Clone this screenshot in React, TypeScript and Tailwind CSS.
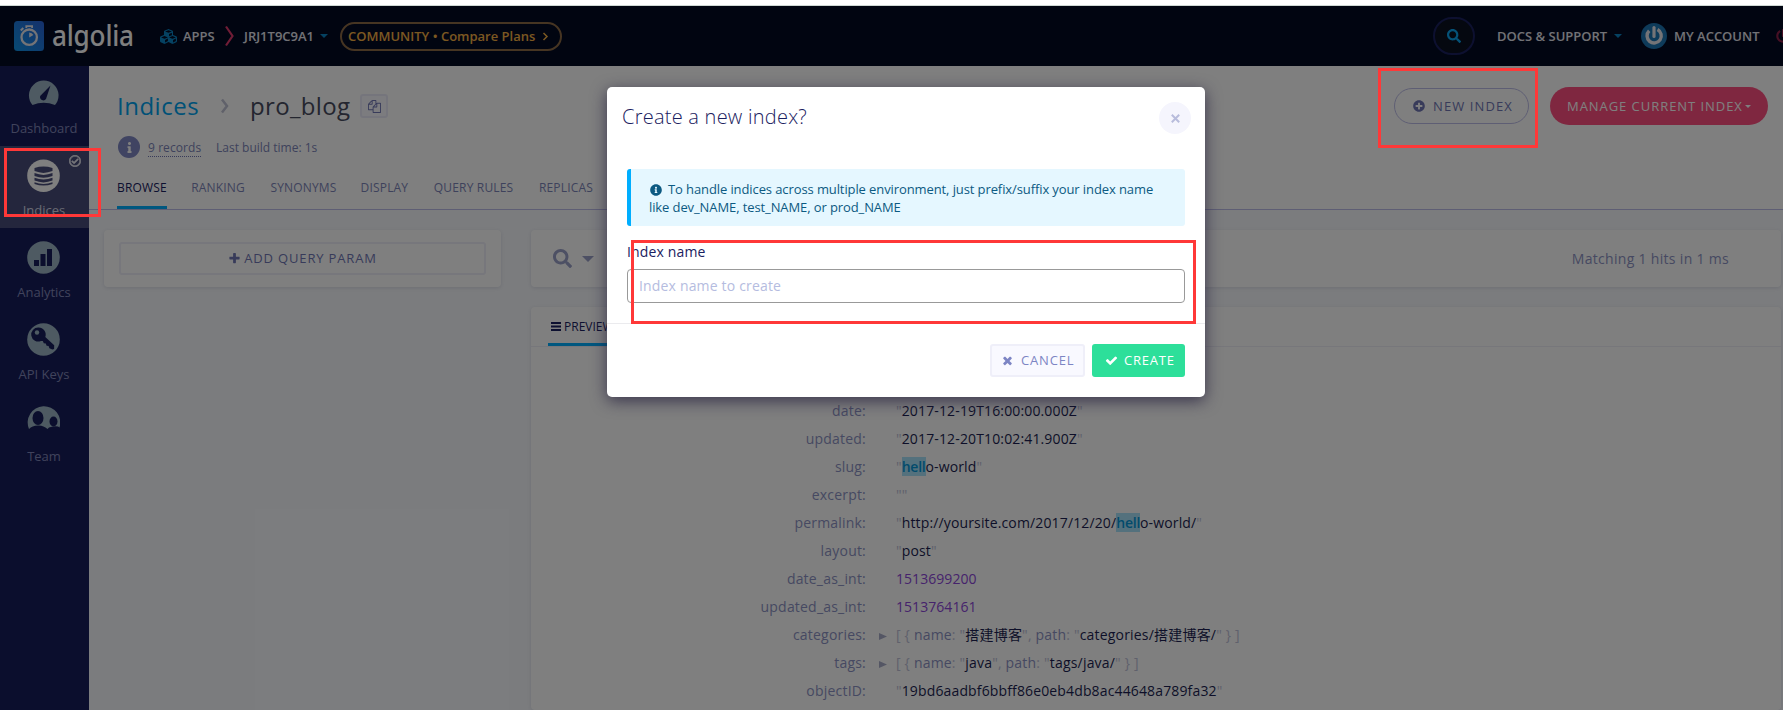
import React from "react";
import { FaCubes, FaSearch, FaPlusCircle, FaInfoCircle, FaInfo, FaPowerOff, FaRegCheckCircle } from "react-icons/fa";

const Glyph = ({ d, className }: { d: string; className: string }) => (
  <svg viewBox="0 0 1792 1792" className={className} fill="currentColor"><path d={d} /></svg>
);
const COPY = "M1696 384q40 0 68 28t28 68v1216q0 40-28 68t-68 28h-960q-40 0-68-28t-28-68v-288h-544q-40 0-68-28t-28-68v-672q0-40 20-88t48-76l408-408q28-28 76-48t88-20h416q40 0 68 28t28 68v328q68-40 128-40h416zm-544 213l-299 299h299v-299zm-640-384l-299 299h299v-299zm196 647l316-316v-416h-384v416q0 40-28 68t-68 28h-416v640h512v-256q0-40 20-88t48-76zm956 804v-1152h-384v416q0 40-28 68t-68 28h-416v640h896z";
const TIMES = "M1490 1322q0 40-28 68l-136 136q-28 28-68 28t-68-28l-294-294-294 294q-28 28-68 28t-68-28l-136-136q-28-28-28-68t28-68l294-294-294-294q-28-28-28-68t28-68l136-136q28-28 68-28t68 28l294 294 294-294q28-28 68-28t68 28l136 136q28 28 28 68t-28 68l-294 294 294 294q28 28 28 68z";
const CHECK = "M1671 566q0 40-28 68l-724 724-136 136q-28 28-68 28t-68-28l-136-136-362-362q-28-28-28-68t28-68l136-136q28-28 68-28t68 28l294 295 656-657q28-28 68-28t68 28l136 136q28 28 28 68z";
const PLUS = "M1600 736v192q0 40-28 68t-68 28h-416v416q0 40-28 68t-68 28h-192q-40 0-68-28t-28-68v-416h-416q-40 0-68-28t-28-68v-192q0-40 28-68t68-28h416v-416q0-40 28-68t68-28h192q40 0 68 28t28 68v416h416q40 0 68 28t28 68z";

const Caret = ({ className }: { className: string }) => (
  <svg viewBox="0 0 10 5" preserveAspectRatio="none" className={className} fill="currentColor"><path d="M0 0h10L5 5z" /></svg>
);

const Dim = ({ children }: { children: React.ReactNode }) => <span className="text-[#c0c2d8]">{children}</span>;
const Str = ({ children }: { children: React.ReactNode }) => (
  <>
    <Dim>"</Dim>
    <span className="text-[#1c1f52]">{children}</span>
    <Dim>"</Dim>
  </>
);
const Hit = () => <span className="bg-[#a8e2fa] text-[#0497d8] font-semibold tracking-[-0.25px] inline-block leading-[19px]">hell</span>;
const Num = ({ children }: { children: React.ReactNode }) => <span className="text-[#8c46d8] tracking-[0.050px]">{children}</span>;

const rows: { k: string; arrow?: boolean; v: React.ReactNode }[] = [
  { k: "date", v: <Str>2017-12-19T16:00:00.000Z</Str> },
  { k: "updated", v: <Str>2017-12-20T10:02:41.900Z</Str> },
  { k: "slug", v: <Str><Hit />o-world</Str> },
  { k: "excerpt", v: <Str>{""}</Str> },
  { k: "permalink", v: <Str>http://yoursite.com/2017/12/20/<Hit />o-world/</Str> },
  { k: "layout", v: <Str>post</Str> },
  { k: "date_as_int", v: <Num>1513699200</Num> },
  { k: "updated_as_int", v: <Num>1513764161</Num> },
  { k: "categories", arrow: true, v: <><Dim>[ {"{"} </Dim>name<Dim>: </Dim><Str>搭建博客</Str><Dim>, </Dim>path<Dim>: </Dim><Str>categories/搭建博客/</Str><Dim> {"}"} ]</Dim></> },
  { k: "tags", arrow: true, v: <><Dim>[ {"{"} </Dim>name<Dim>: </Dim><Str>java</Str><Dim>, </Dim>path<Dim>: </Dim><Str>tags/java/</Str><Dim> {"}"} ]</Dim></> },
  { k: "objectID", v: <Str>19bd6aadbf6bbff86e0eb4db8ac44648a789fa32</Str> },
];

const Disc = ({ children }: { children: React.ReactNode }) => (
  <svg className="mr-px" width="33" height="33" viewBox="0 0 33 33" fill="none">{children}</svg>
);

const SideItem = ({ label, className, children }: { label: string; className: string; children: React.ReactNode }) => (
  <div className={"relative pr-px flex flex-col items-center " + className}>
    {children}
    <span className="mt-[9px] text-[13px] leading-[18px]">{label}</span>
  </div>
);

const Header = () => (
  <header className="h-[60px] bg-[#020a23] flex items-center text-[13px] font-semibold text-[#e4e4ec] whitespace-nowrap shrink-0">
    <svg className="ml-[14px]" width="30" height="30" viewBox="0 0 30 30" fill="none">
      <defs>
        <linearGradient id="g" x1="1" y1="0" x2="0" y2="1">
          <stop offset="0" stopColor="#2a62d8" />
          <stop offset="1" stopColor="#0f94e6" />
        </linearGradient>
      </defs>
      <rect width="30" height="30" rx="3.5" fill="url(#g)" />
      <circle cx="15.200" cy="16.200" r="7.700" stroke="#e8e8ee" strokeWidth="2.300" />
      <path d="M15.200 16.500V11.500a4.800 4.800 0 0 1 4.200 2.600z" fill="#e8e8ee" />
      <path d="M12.300 7V5.200h5.800V7" stroke="#e8e8ee" strokeWidth="1.800" />
      <path d="M6.800 9.500l2.500-2.500" stroke="#e8e8ee" strokeWidth="2" />
    </svg>
    <span className="ml-[8px] w-[84px] flex justify-start">
      <span className="inline-block origin-left scale-x-[0.9] text-[29px] leading-[50px] font-medium tracking-[-0.200px] -mt-[3px] text-white font-['Noto_Sans',sans-serif]">algolia</span>
    </span>
    <FaCubes className="ml-[24px] text-[17px] text-[#0a84c4]" />
    <span className="ml-[6px] w-[34px] pt-px">APPS</span>
    <svg className="ml-[6px]" width="14" height="24" viewBox="0 0 14 24" fill="none"><path d="M3 2.500l6.500 9.500L3 21.500" stroke="#e03a6c" strokeWidth="2.200" /></svg>
    <span className="ml-[7px] w-[69px] pt-px">JRJ1T9C9A1</span>
    <Caret className="ml-[7px] w-[8px] h-[4px] text-[#0a84c4]" />
    <div className="ml-[12px] w-[222px] h-[29px] rounded-full border-2 border-[#8d6a45] flex items-center pl-[6px] text-[#f6b043]">
      <span className="w-[187px] pt-px">COMMUNITY • Compare Plans</span>
      <svg className="ml-[7px]" width="7" height="9" viewBox="0 0 7 9" fill="none"><path d="M1.500 1l3.500 3.500L1.500 8" stroke="#f6b043" strokeWidth="1.500" /></svg>
    </div>
    <div className="flex-1" />
    <div className="w-[42px] h-[38px] rounded-full border-2 border-[#1a2160] flex items-center justify-center bg-[#0a1020]"><FaSearch className="text-[14px] text-[#0aa4f0]" /></div>
    <span className="ml-[22px] w-[111px] pt-px">DOCS &amp; SUPPORT</span>
    <Caret className="ml-[6px] w-[8px] h-[4px] text-[#0a84c4]" />
    <svg className="ml-[19px]" width="26" height="26" viewBox="0 0 26 26" fill="none">
      <circle cx="13" cy="13" r="13" fill="#1c76b4" />
      <path d="M8.200 7.800a7.100 7.100 0 1 0 8.300-1.200" stroke="#e8e8ee" strokeWidth="3.400" />
      <path d="M13 4.500v9" stroke="#e8e8ee" strokeWidth="3.200" strokeLinecap="round" />
    </svg>
    <span className="ml-[7px] w-[86px] pt-px">MY ACCOUNT</span>
    <div className="ml-[16px] w-[7px] overflow-hidden"><FaPowerOff className="text-[14px] text-[#8c2048]" /></div>
  </header>
);

const Sidebar = () => (
  <aside className="w-[89px] bg-[#171d5a] shrink-0">
    <SideItem label="Dashboard" className="h-[80px] pt-[11px] text-[#8187b8]">
      <Disc><path d="M5.500 28A14.800 14.800 0 1 1 28 28Q16.500 23.500 5.500 28Z" fill="#9cb4c4" /><path d="M23.500 8.500L19 22a3.300 3.300 0 0 1-5.800-2.900z" fill="#171d5a" /></Disc>
    </SideItem>
    <SideItem label="Indices" className="h-[82px] pt-[13px] bg-[#494d7a] text-[#d5d7e6]">
      <Disc>
        <circle cx="16.500" cy="16.700" r="16.300" fill="#fff" />
        <path d="M7.500 8.900q9-2.800 18 0v3.200q-9 3.600-18 0zM7.500 14.100q9 3.600 18 0v2.900q-9 3.600-18 0zM7.500 18.700q9 3.600 18 0v2.900q-9 3.600-18 0zM7.500 23.200q9 3.600 18 0v1.800q-9 3-18 0z" fill="#494d7a" />
      </Disc>
      <FaRegCheckCircle className="absolute right-[8px] top-[9px] text-[12px] text-[#e8e8f0] stroke-[#e8e8f0] stroke-[24px]" />
    </SideItem>
    <SideItem label="Analytics" className="h-[82px] pt-[13px] text-[#8187b8]">
      <Disc><circle cx="16.500" cy="16.500" r="16.300" fill="#9cb4c4" /><path d="M7 19h5v6H7zM13.500 13h5v12h-5zM20 8h5v17h-5z" fill="#171d5a" /></Disc>
    </SideItem>
    <SideItem label="API Keys" className="h-[82px] pt-[13px] text-[#8187b8]">
      <Disc><circle cx="16.500" cy="16.500" r="16.300" fill="#9cb4c4" /><path d="M11.500 4.500a7 7 0 1 0 2.500 13.400l1.800.2 1 2.200 2 .3.800 2.200 2 .3.800 2.200 3 1.200 1.700-.6.100-3.600-8.900-8.400A7 7 0 0 0 11.500 4.500z" fill="#171d5a" /><circle cx="10" cy="9.500" r="2.200" fill="#9cb4c4" /></Disc>
    </SideItem>
    <SideItem label="Team" className="h-[82px] pt-[13px] text-[#8187b8]">
      <Disc><path d="M2 24A16.300 16.300 0 1 1 32.500 22.500L31 21.500Q28 20.500 22 22.500L20.500 24Q16 20 11 20.500Q5 20.500 2 24Z" fill="#9cb4c4" /><ellipse cx="11" cy="13" rx="5.500" ry="7" fill="#171d5a" /><ellipse cx="26.500" cy="16.500" rx="4" ry="5" fill="#171d5a" /></Disc>
    </SideItem>
  </aside>
);

const tabs: [string, string][] = [["BROWSE", "w-[50px]"], ["RANKING", "w-[55px]"], ["SYNONYMS", "w-[66px]"], ["DISPLAY", "w-[49px]"], ["QUERY RULES", "w-[81px]"], ["REPLICAS", "w-[60px]"]];

const Card = "bg-white rounded-[4px] shadow-[0_1px_4px_rgba(60,60,100,0.15)]";

const Page = () => (
  <div className="flex-1 flex flex-col bg-[#f7f9fd]">
    <div className="h-[144px] bg-white border-b border-[#bdbde8] flex flex-col shrink-0">
      <div className="flex items-center h-[38px] mt-[21px] pl-[28px] pr-[15px]">
        <span className="w-[81px] text-[24px] tracking-[0.500px] text-[#00a2ee]">Indices</span>
        <svg className="ml-[22px]" width="10" height="16" viewBox="0 0 10 16" fill="none"><path d="M2 1.500l5 6.500-5 6.500" stroke="#c0c2d4" strokeWidth="2.500" /></svg>
        <span className="ml-[20px] w-[101px] text-[24px] tracking-[0.350px] text-[#484c60] whitespace-nowrap">pro_blog</span>
        <div className="ml-[9px] w-[28px] h-[24px] rounded-[3px] border-2 border-[#ebebf8] bg-[#f8f9ff] flex items-center justify-center text-[#7077b5]"><Glyph d={COPY} className="size-[13px]" /></div>
        <div className="flex-1" />
        <div className="w-[135px] h-[36px] rounded-full border border-[#bdbde8] flex items-center pl-[18px] text-[13px] text-[#7077b5]"><FaPlusCircle className="text-[12px]" /><span className="ml-[8px] pt-px tracking-[1.100px] whitespace-nowrap">NEW INDEX</span></div>
        <div className="ml-[21px] w-[218px] h-[38px] rounded-full bg-[#ff4f81] flex items-center pl-[17px] text-[13px] text-white"><span className="tracking-[0.950px] w-[176px] pt-px whitespace-nowrap">MANAGE CURRENT INDEX</span><Caret className="ml-[2px] w-[6px] h-[3px]" /></div>
      </div>
      <div className="flex items-center mt-[11px] pl-[29px] h-[22px] text-[12px] text-[#7d85b8]">
        <div className="size-[22px] rounded-full bg-[#8088c4] text-white flex items-center justify-center"><FaInfo className="text-[11px]" /></div>
        <span className="ml-[8px] w-[53px] tracking-[0.080px] whitespace-nowrap border-b border-dotted border-[#7077b5] leading-[17px] mt-[2px]">9 records</span>
        <span className="ml-[15px] mt-px">Last build time: 1s</span>
      </div>
      <div className="flex flex-1 pl-[28px] gap-[24.200px] items-end">
        {tabs.map(([t, w], i) => (
          <div key={t} className={w + " h-[31px] pt-px text-[12px] tracking-[0.180px] whitespace-nowrap leading-[18px] " + (i === 0 ? "border-b-[3px] border-[#00aeff] text-[#1a2160]" : "text-[#7d85b8]")}>{t}</div>
        ))}
      </div>
    </div>
    <div className="flex flex-1 pt-[20px] pl-[15px] pr-[2px] gap-[30px]">
      <div className={Card + " w-[397px] h-[57px] pt-[12px] px-[15px]"}>
        <div className="h-[33px] rounded-[3px] border-2 border-[#eeeef8] flex items-center justify-center text-[13px] text-[#7077b5]"><Glyph d={PLUS} className="size-[13px]" /><span className="ml-[3px] tracking-[0.850px]">ADD QUERY PARAM</span></div>
      </div>
      <div className="flex-1 flex flex-col gap-[20px]">
        <div className={Card + " h-[57px] flex items-center pl-[22px] pr-[52px] shrink-0"}>
          <FaSearch className="text-[19px] text-[#9aa0c8]" />
          <Caret className="ml-[10px] w-[12px] h-[6px] text-[#9aa0c8]" />
          <div className="flex-1" />
          <span className="text-[14px] leading-[20px] tracking-[0.310px] text-[#8d93c4]">Matching 1 hits in 1 ms</span>
        </div>
        <div className={Card + " flex-1 flex flex-col"}>
          <div className="h-[40px] border-b border-[#efeff6] pl-[17px] flex shrink-0">
            <div className="w-[80px] border-b-[3px] border-[#00aeff] flex items-center pl-[3px] pt-[3px] gap-[3px] text-[12px] text-[#1a2160]">
              <svg width="10" height="9" viewBox="0 0 10 9" fill="currentColor"><path d="M0 0h10v2H0zM0 3.500h10v2H0zM0 7h10v2H0z" /></svg>PREVIEW
            </div>
          </div>
          <div className="pt-[49px] text-[14px] tracking-[0.140px] text-[#8d93c4]">
            {rows.map((r) => (
              <div key={r.k} className="h-[28px] flex items-center whitespace-nowrap">
                <span className="w-[335px] tracking-[0.200px] text-right">{r.k}:</span>
                <span className="w-[30px] pl-[13px]">
                  {r.arrow && <svg width="8" height="7" viewBox="0 0 8 7" className="mt-[4px]" fill="#a8acc8"><path d="M0 0l8 3.500L0 7z" /></svg>}
                </span>
                <span className={r.arrow ? "tracking-[0.190px]" : ""}>{r.v}</span>
              </div>
            ))}
          </div>
        </div>
      </div>
    </div>
  </div>
);

const Modal = () => (
  <div className="absolute left-[607px] top-[87px] w-[598px] h-[310px] bg-white rounded-[5px] shadow-[0_4px_16px_rgba(35,30,60,0.75)] flex flex-col text-[#1a2160]">
    <div className="h-[82px] flex items-start justify-between pl-[15px] pr-[14px] pt-[15px]">
      <h2 className="text-[20px] font-light leading-[30px] tracking-[0.240px]">Create a new index?</h2>
      <div className="size-[32px] rounded-full bg-[#f5f5fd] flex items-center justify-center text-[#b8bcdc]">
        <svg width="9" height="9" viewBox="0 0 9 9" fill="none"><path d="M.8.8l7.400 7.400M8.200.8L.8 8.200" stroke="currentColor" strokeWidth="2" /></svg>
      </div>
    </div>
    <div className="mx-[20px] h-[57px] rounded-[3px] border-l-4 border-[#00aeff] bg-[#e5f7ff] pl-[18px] pt-[11px] text-[13px] leading-[18px] tracking-[-0.100px] text-[#0c5a82] whitespace-nowrap">
      <FaInfoCircle className="inline text-[12px] mr-[6px] -mt-[2px] ml-[1px]" />To handle indices across multiple environment, just prefix/suffix your index name<br />like dev_NAME, test_NAME, or prod_NAME
    </div>
    <label className="mt-[16px] ml-[20px] text-[14px] leading-[20px] tracking-[0.150px]">Index name</label>
    <div className="mx-[20px] mt-[7px] h-[34px] rounded-[4px] border border-[#999] pl-[11px] pb-px flex items-center text-[14px] tracking-[0.170px] text-[#b5bce0]">Index name to create</div>
    <div className="mt-[20px] border-t border-[#ebebee] flex pt-[20px] pr-[20px] gap-[7px] justify-end text-[13px]">
      <div className="w-[95px] h-[33px] rounded-[3px] border-2 border-[#efeff9] bg-[#f9f9ff] flex items-center pl-[9px] text-[#7d85c4]"><Glyph d={TIMES} className="size-[13px]" /><span className="ml-[7px] tracking-[0.850px]">CANCEL</span></div>
      <div className="w-[93px] h-[33px] rounded-[3px] bg-[#2ddf9a] flex items-center pl-[13px] text-white"><Glyph d={CHECK} className="size-[13px]" /><span className="ml-[6px] tracking-[0.800px]">CREATE</span></div>
    </div>
  </div>
);

export default function App() {
  return (
    <div className="relative w-[1783px] h-[710px] overflow-hidden bg-white font-['Open_Sans','Noto_Sans_CJK_SC',sans-serif] flex flex-col">
      <div className="h-[6px] bg-white border-b border-[#cfd8d4] shrink-0" />
      <div className="relative flex-1 flex flex-col">
        <Header />
        <div className="flex flex-1"><Sidebar /><Page /></div>
        <div className="absolute inset-0 bg-black/50" />
      </div>
      <Modal />
      <div className="absolute left-[4px] top-[148px] w-[97px] h-[69px] border-3 border-[#ff3838]" />
      <div className="absolute left-[1378px] top-[68px] w-[160px] h-[80px] border-3 border-[#ff3838]" />
      <div className="absolute left-[631px] top-[240px] w-[565px] h-[84px] border-3 border-[#ff3838]" />
    </div>
  );
}
